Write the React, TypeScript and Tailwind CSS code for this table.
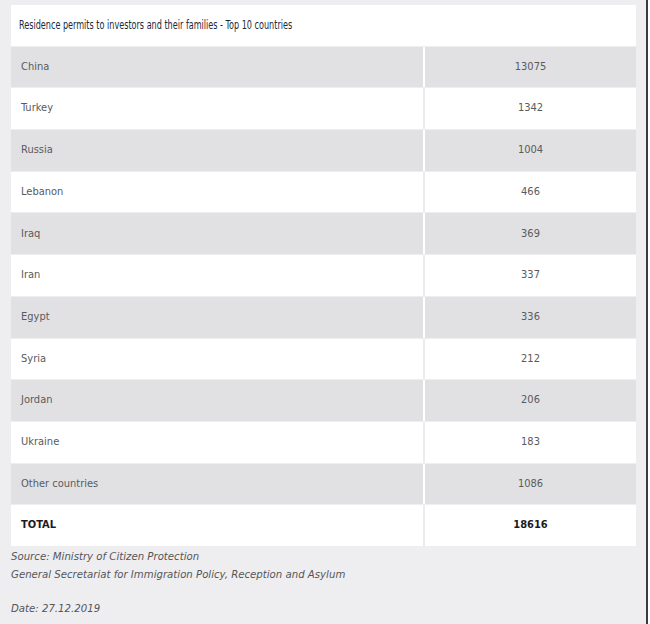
const rows: [string, string][] = [
  ["China", "13075"],
  ["Turkey", "1342"],
  ["Russia", "1004"],
  ["Lebanon", "466"],
  ["Iraq", "369"],
  ["Iran", "337"],
  ["Egypt", "336"],
  ["Syria", "212"],
  ["Jordan", "206"],
  ["Ukraine", "183"],
  ["Other countries", "1086"],
];

const font = {
  fontFamily: '"DejaVu Sans Condensed", "Liberation Sans", sans-serif',
};

export default function App() {
  return (
    <div
      className="h-[624px] w-[648px] border-r-2 border-[#3a3a3a] bg-[#eeeef0] pl-[11px] pr-[10px] pt-[5px]"
      style={font}
    >
      <div className="flex w-[625px] flex-col gap-px">
        {/* Title */}
        <div className="flex h-[40.7px] items-center bg-white px-[8px] text-[12px] text-[#1c2b3a]">
          <span className="inline-block origin-left scale-x-[0.75] whitespace-nowrap">
            Residence permits to investors and their families - Top 10 countries
          </span>
        </div>

        {rows.map(([country, value], i) => (
          <div
            key={country}
            className={`flex h-[40.7px] text-[11px] text-[#5a5a5e] ${
              i % 2 === 0 ? "bg-[#e1e1e3]" : "bg-white"
            }`}
          >
            <div className="flex w-[412px] items-center pl-[10px]">{country}</div>
            <div
              className={`flex flex-1 items-center justify-center border-l-2 ${
                i % 2 === 0 ? "border-white" : "border-[#ececee]"
              }`}
            >
              {value}
            </div>
          </div>
        ))}

        {/* Total */}
        <div className="flex h-[40.7px] bg-white text-[11px] font-bold text-[#1c1c1e]">
          <div className="flex w-[412px] items-center pl-[10px]">TOTAL</div>
          <div className="flex flex-1 items-center justify-center border-l-2 border-[#ececee]">
            18616
          </div>
        </div>
      </div>

      <div className="pt-[2px] text-[11.3px] italic leading-[18px] text-[#55555a]">
        <p>Source: Ministry of Citizen Protection</p>
        <p>General Secretariat for Immigration Policy, Reception and Asylum</p>
        <p className="mt-[16px]">Date: 27.12.2019</p>
      </div>
    </div>
  );
}
